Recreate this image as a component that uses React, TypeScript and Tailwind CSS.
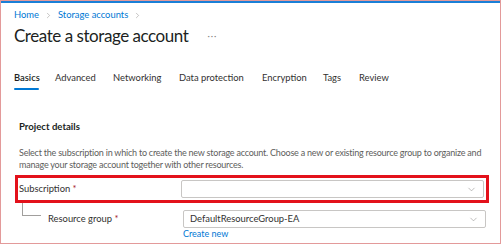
import { ChevronDown, ChevronRight } from "lucide-react";

const tabs = [
  { label: "Basics", w: "w-[41px]" },
  { label: "Advanced", w: "w-[58px]" },
  { label: "Networking", w: "w-[66px]" },
  { label: "Data protection", w: "w-[83px]" },
  { label: "Encryption", w: "w-[61px]" },
  { label: "Tags", w: "w-[36px]" },
  { label: "Review", w: "w-[40px]" },
];

function Select({ value }: { value?: string }) {
  return (
    <div className="flex h-[18px] w-[303px] items-center justify-between rounded-[2px] border border-[#c8c6c4] bg-white pl-[6px] pr-[6px]">
      <span className="text-[9.4px] text-[#323130]">{value}</span>
      <ChevronDown size={11} strokeWidth={1.2} className="text-[#8a8886]" />
    </div>
  );
}

export default function App() {
  return (
    <div
      className="flex h-[244px] w-[501px] flex-col overflow-hidden border border-[#e39a9a] bg-white text-[#323130]"
      style={{ fontFamily: 'Lato, "Open Sans", sans-serif' }}
    >
      <div className="h-[2px] bg-[#1a7fd6]" />
      <div className="pl-[13px] pt-[6px]">
        {/* breadcrumb */}
        <div className="flex h-[12px] items-center gap-[5px] text-[9.4px] leading-[12px] text-[#0078d4]">
          <span>Home</span>
          <ChevronRight size={9} strokeWidth={1.3} className="text-[#8a8886]" />
          <span>Storage accounts</span>
          <ChevronRight size={9} strokeWidth={1.3} className="text-[#8a8886]" />
        </div>

        {/* title */}
        <div className="mt-[4px] flex h-[22px] items-center">
          <h1 className="text-[17px] leading-[22px] font-normal tracking-[-0.45px] text-[#201f1e]">
            Create a storage account
          </h1>
          <span className="ml-[19px] text-[9px] tracking-[1px] text-[#8a8886]">···</span>
        </div>

        {/* tabs */}
        <div className="mt-[24px] flex text-[9.4px] leading-[14px]">
          {tabs.map((t, i) => (
            <div key={t.label} className={`flex flex-col items-start ${t.w}`}>
              <span className={i === 0 ? "font-semibold text-[#201f1e]" : "text-[#323130]"}>{t.label}</span>
              <span className={i === 0 ? "mt-[3px] h-[2px] w-[25px] rounded-full bg-[#0078d4]" : "mt-[3px] h-[2px]"} />
            </div>
          ))}
        </div>
      </div>

      {/* project details */}
      <div className="pl-[18px] pr-[10px] pt-[30px]">
        <div className="text-[9.6px] leading-[14px] font-bold text-[#201f1e]">Project details</div>
        <p className="mt-[13px] text-[9px] leading-[12px] tracking-[-0.22px] text-[#605e5c]">
          Select the subscription in which to create the new storage account. Choose a new or existing resource group to organize and
          manage your storage account together with other resources.
        </p>
      </div>

      {/* subscription (highlighted) */}
      <div className="ml-[14px] mr-[11px] mt-[4px] flex h-[28px] items-center border-[3px] border-[#e3111b] pl-[1px] pr-[2px]">
        <span className="w-[162px] text-[9.4px] text-[#323130]">
          Subscription <span className="text-[#a4262c]">*</span>
        </span>
        <Select />
      </div>

      {/* resource group */}
      <div className="relative ml-[20px] mt-[7px] flex items-start">
        <div className="absolute left-[1px] top-[-7px] h-[13px] w-[19px] border-b border-l border-[#a19f9d]" />
        <span className="ml-[27px] w-[135px] pt-[2px] text-[9.4px] leading-[14px] text-[#323130]">
          Resource group <span className="text-[#a4262c]">*</span>
        </span>
        <div className="flex flex-col">
          <Select value="DefaultResourceGroup-EA" />
          <span className="text-[9px] leading-[10px] mt-[1px] text-[#0078d4]">Create new</span>
        </div>
      </div>
    </div>
  );
}
